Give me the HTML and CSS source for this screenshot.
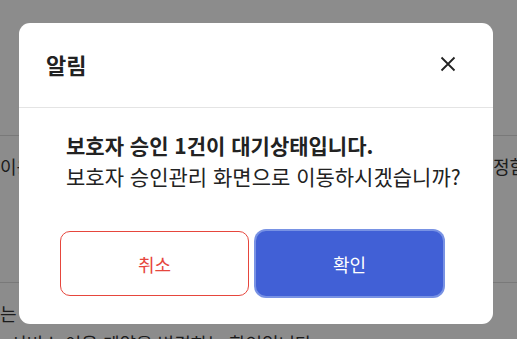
FILE: index.html
```html
<!DOCTYPE html>
<html lang="ko">
  <head>
    <meta charset="UTF-8" />
    <meta name="viewport" content="width=device-width, initial-scale=1.0" />
    <title>알림</title>
    <link rel="stylesheet" href="styles.css">
  </head>
  <body>
    <div class="page">
      <div class="page-top"></div>
      <div class="page-row">
        <span class="row-left">이용</span>
        <span class="row-right">정함</span>
      </div>
      <div class="page-row second">
        <span class="row-left">는</span>
      </div>
      <p class="page-foot">서비스 이용 계약을 변경하는 확인입니다.</p>
    </div>

    <div class="overlay">
      <div class="modal">
        <div class="modal-header">
          <h2>알림</h2>
          <button class="close-btn" aria-label="닫기">
            <svg width="16" height="16" viewBox="0 0 16 16">
              <path d="M1.5 1.5 L14.5 14.5 M14.5 1.5 L1.5 14.5" stroke="#222" stroke-width="1.8" fill="none" />
            </svg>
          </button>
        </div>
        <div class="modal-body">
          <p class="strong">보호자 승인 1건이 대기상태입니다.</p>
          <p>보호자 승인관리 화면으로 이동하시겠습니까?</p>
        </div>
        <div class="modal-actions">
          <button class="btn cancel">취소</button>
          <button class="btn confirm">확인</button>
        </div>
      </div>
    </div>
  </body>
</html>
```

FILE: styles.css
```css
html,
body {
  margin: 0;
  height: 100%;
  overflow: hidden;
}
body {
  font-family: "Noto Sans CJK KR", "Noto Sans", sans-serif;
  background: #fff;
  color: #333;
}
.page-top {
  height: 135px;
  border-bottom: 1px solid #ddd;
}
.page-row {
  display: flex;
  white-space: nowrap;
  font-size: 18px;
  line-height: 24px;
  height: 147px;
  border-bottom: 1px solid #ddd;
  padding-top: 18px;
  box-sizing: border-box;
}
.page-row .row-left {
  flex: 0 0 493px;
}
.page-row .row-right {
  flex: 0 0 auto;
}
.page-row.second {
  height: 48px;
  border-bottom: none;
  padding-top: 18px;
}
.page-foot {
  margin: 0;
  padding-left: 10px;
  font-size: 18px;
  line-height: 24px;
  white-space: nowrap;
}
.overlay {
  position: fixed;
  inset: 0;
  background: rgba(0, 0, 0, 0.45);
  padding: 23px 0 0 19px;
}
.modal {
  width: 474px;
  height: 301px;
  background: #fff;
  border-radius: 11px;
  box-sizing: border-box;
}
.modal-header {
  height: 85px;
  border-bottom: 1px solid #e4e4e4;
  display: flex;
  align-items: center;
  justify-content: space-between;
  padding: 0 36px 3px 27px;
  box-sizing: border-box;
}
.modal-header h2 {
  margin: 0;
  font-size: 22px;
  font-weight: 700;
  color: #222;
}
.close-btn {
  border: none;
  background: none;
  padding: 0;
  width: 18px;
  height: 18px;
  display: flex;
  align-items: center;
  justify-content: center;
}
.modal-body {
  padding: 22px 10px 0 47px;
  height: 123px;
  box-sizing: border-box;
}
.modal-body p {
  margin: 0;
  font-size: 21px;
  line-height: 31px;
  color: #222;
  white-space: nowrap;
}
.modal-body .strong {
  font-weight: 700;
}
.modal-actions {
  display: flex;
  gap: 7px;
  padding: 0 50px 0 41px;
}
.btn {
  flex: 1;
  height: 65px;
  border-radius: 10px;
  font-family: inherit;
  font-size: 18px;
  cursor: pointer;
}
.cancel {
  background: #fff;
  border: 1.5px solid #e6463d;
  color: #e6463d;
}
.confirm {
  background: #4160d6;
  border: none;
  color: #fff;
  box-shadow: 0 0 0 2px #7892e4;
}
```
